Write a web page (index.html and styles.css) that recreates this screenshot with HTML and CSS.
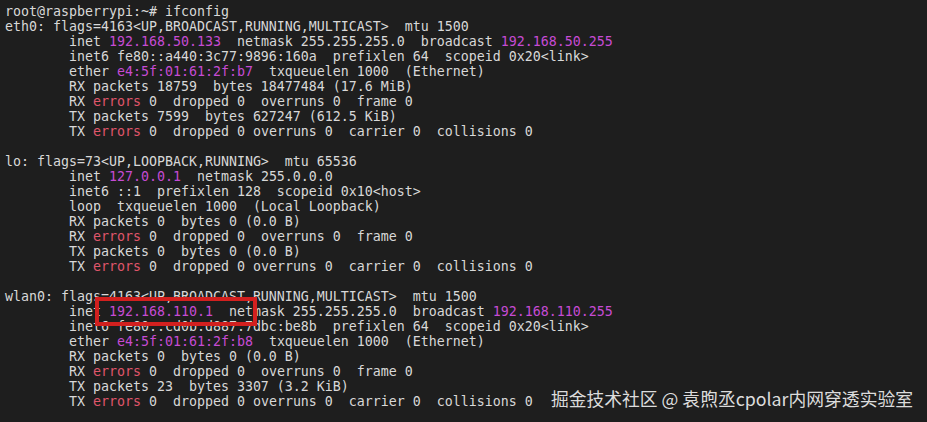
FILE: index.html
```html
<!DOCTYPE html>
<html>
<head>
<meta charset="utf-8">
<link rel="stylesheet" href="styles.css">
</head>
<body>
<div class="term">
<pre class="out">root@raspberrypi:~# ifconfig
eth0: flags=4163&lt;UP,BROADCAST,RUNNING,MULTICAST&gt;  mtu 1500
        inet <span class="m">192.168.50.133</span>  netmask 255.255.255.0  broadcast <span class="m">192.168.50.255</span>
        inet6 fe80::a440:3c77:9896:160a  prefixlen 64  scopeid 0x20&lt;link&gt;
        ether <span class="m">e4:5f:01:61:2f:b7</span>  txqueuelen 1000  (Ethernet)
        RX packets 18759  bytes 18477484 (17.6 MiB)
        RX <span class="r">errors</span> 0  dropped 0  overruns 0  frame 0
        TX packets 7599  bytes 627247 (612.5 KiB)
        TX <span class="r">errors</span> 0  dropped 0 overruns 0  carrier 0  collisions 0

lo: flags=73&lt;UP,LOOPBACK,RUNNING&gt;  mtu 65536
        inet <span class="m">127.0.0.1</span>  netmask 255.0.0.0
        inet6 ::1  prefixlen 128  scopeid 0x10&lt;host&gt;
        loop  txqueuelen 1000  (Local Loopback)
        RX packets 0  bytes 0 (0.0 B)
        RX <span class="r">errors</span> 0  dropped 0  overruns 0  frame 0
        TX packets 0  bytes 0 (0.0 B)
        TX <span class="r">errors</span> 0  dropped 0 overruns 0  carrier 0  collisions 0

wlan0: flags=4163&lt;UP,BROADCAST,RUNNING,MULTICAST&gt;  mtu 1500
        inet <span class="m">192.168.110.1</span>  netmask 255.255.255.0  broadcast <span class="m">192.168.110.255</span>
        inet6 fe80::cd0b:d887:7dbc:be8b  prefixlen 64  scopeid 0x20&lt;link&gt;
        ether <span class="m">e4:5f:01:61:2f:b8</span>  txqueuelen 1000  (Ethernet)
        RX packets 0  bytes 0 (0.0 B)
        RX <span class="r">errors</span> 0  dropped 0  overruns 0  frame 0
        TX packets 23  bytes 3307 (3.2 KiB)
        TX <span class="r">errors</span> 0  dropped 0 overruns 0  carrier 0  collisions 0</pre>
<div class="mark"></div>
<div class="wm">掘金技术社区 @ 袁煦丞cpolar内网穿透实验室</div>
</div>
</body>
</html>
```
FILE: styles.css
```css
html, body {
  margin: 0;
  padding: 0;
  background: #1e1e1e;
}
.term {
  position: relative;
  width: 927px;
  height: 422px;
  overflow: hidden;
  background: #1e1e1e;
}
.out {
  margin: 0;
  padding: 4px 0 0 5px;
  font-family: "DejaVu Sans Mono", monospace;
  font-size: 13.29px;
  line-height: 15px;
  color: #d8d8d8;
}
.m {
  color: #c64bd4;
}
.r {
  color: #e0566b;
}
.mark {
  position: absolute;
  left: 95px;
  top: 297px;
  width: 154px;
  height: 21px;
  border: 4px solid #d2201f;
}
.wm {
  position: absolute;
  right: 14px;
  bottom: 13px;
  font-family: "Noto Sans CJK SC", sans-serif;
  font-size: 17.8px;
  line-height: 22px;
  color: #dcdcdc;
}
```
